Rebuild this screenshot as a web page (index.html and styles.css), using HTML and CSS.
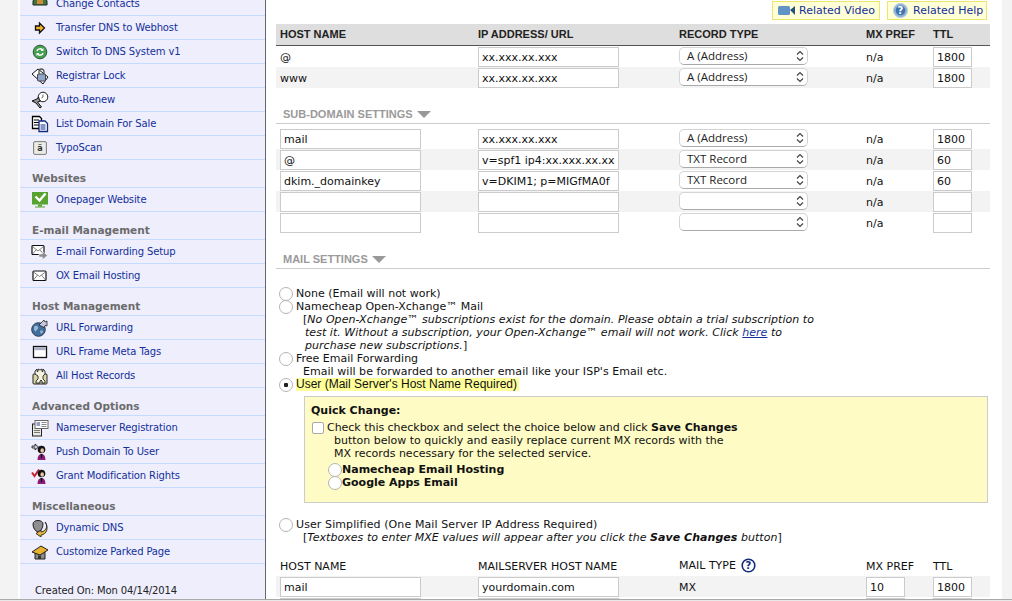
FILE: index.html
```html
<!DOCTYPE html>
<html lang="en">
<head>
  <meta charset="UTF-8">
  <title>Domain DNS Settings</title>
  <link rel="stylesheet" href="styles.css">
</head>
<body>

  <div class="page">

  <div class="side">
    <ul class="menu first">
      <li><svg class="ico" viewBox="0 0 18 18"><path d="M2 6l2-3h10l2 3v4H2z" fill="#3c7a3a" stroke="#222"/><circle cx="9" cy="1" r="3.500" fill="#b4682c" stroke="#222"/><rect x="6" y="3" width="6" height="6" fill="#d08a3c"/></svg><span>Change Contacts</span></li>
      <li><svg class="ico" viewBox="0 0 18 18"><path d="M4.500 7h4V4l5 5-5 5v-3h-4z" fill="#f2b32c" stroke="#111" stroke-width="1.300"/></svg><span>Transfer DNS to Webhost</span></li>
      <li><svg class="ico" viewBox="0 0 18 18"><circle cx="9" cy="9" r="6.800" fill="#46a04e" stroke="#2c5c3a"/><path d="M6 8a3.200 3.200 0 0 1 5.300-1.300M12 10a3.200 3.200 0 0 1-5.300 1.300" fill="none" stroke="#fff" stroke-width="1.400"/><path d="M12.500 5v3h-3zM5.500 13v-3h3z" fill="#fff"/></svg><span>Switch To DNS System v1</span></li>
      <li><svg class="ico" viewBox="0 0 18 18"><path d="M1 7l6-5 10 8-5 7z" fill="#fff" stroke="#111"/><rect x="6.500" y="7" width="8" height="7" rx="1" fill="#8fa5c8" stroke="#445"/><path d="M8 7V4.500a2.500 2.500 0 0 1 5 0V7" fill="none" stroke="#555" stroke-width="1.300"/></svg><span>Registrar Lock</span></li>
      <li><svg class="ico" viewBox="0 0 18 18"><circle cx="12" cy="6" r="4.800" fill="#fff" stroke="#222"/><path d="M12 3.500V6l-1.500 1" fill="none" stroke="#444" stroke-width=".8"/><path d="M1 10l5-2 1.500-2 1 3 1 1-3 1 4 5-1.500 1-4-5z" fill="#999" stroke="#111"/></svg><span>Auto-Renew</span></li>
      <li><svg class="ico" viewBox="0 0 18 18"><path d="M1.500 1.500h7l2 2v10h-9z" fill="#fff" stroke="#000" stroke-width="1.300"/><path d="M3 5h5M3 7.500h5M3 10h5" stroke="#000"/><path d="M8 6h6l2.500 2.500v8H8z" fill="#fff" stroke="#102a80" stroke-width="1.300"/><path d="M9.500 10h5M9.500 12h5M9.500 14h5" stroke="#102a80"/></svg><span>List Domain For Sale</span></li>
      <li><svg class="ico" viewBox="0 0 18 18"><rect x="2.500" y="2.500" width="13" height="13" rx="1.500" fill="#dcdcd6" stroke="#888"/><rect x="4" y="4" width="10" height="10" fill="#ecece6"/><text x="9" y="11.500" class="key">ä</text></svg><span>TypoScan</span></li>
    </ul>

    <h3>Websites</h3>
    <ul class="menu">
      <li><svg class="ico" viewBox="0 0 18 18"><rect x="1" y="1" width="16" height="12.500" fill="#57a32f"/><path d="M7 13.500h4v2H7z" fill="#57a32f"/><path d="M4 15.500h10v1H4z" fill="#57a32f"/><path d="M4.500 5.500l4 4 6-7" fill="none" stroke="#fff" stroke-width="2.400"/></svg><span>Onepager Website</span></li>
    </ul>

    <h3>E-mail Management</h3>
    <ul class="menu">
      <li><svg class="ico" viewBox="0 0 18 18"><rect x="1" y="2.500" width="12" height="9" rx="1" fill="#fff" stroke="#111" stroke-width="1.200"/><path d="M1.500 3.500L7 8l5.500-4.500M1.500 11L5.500 6.500M12.500 11L8.500 6.500" fill="none" stroke="#666" stroke-width=".8"/><path d="M8 11h3.500V8.500l5 4-5 4V14H8z" fill="#8a8a92" stroke="#eee" stroke-width=".6"/></svg><span>E-mail Forwarding Setup</span></li>
      <li><svg class="ico" viewBox="0 0 18 18"><rect x="2" y="4" width="13" height="9.500" rx="1" fill="#fff" stroke="#111" stroke-width="1.200"/><path d="M2.500 5l6 4.500 6-4.500M2.500 13L6.500 8M14.500 13L10.500 8" fill="none" stroke="#666" stroke-width=".8"/></svg><span>OX Email Hosting</span></li>
    </ul>

    <h3>Host Management</h3>
    <ul class="menu">
      <li><svg class="ico" viewBox="0 0 18 18"><circle cx="7.500" cy="10.500" r="6.800" fill="#3f6f9c" stroke="#2c3e58"/><path d="M3 8c2-2 3-1 4 0s-1 3-2 4-2 0-2-4zM9 12c2-1 3 0 3 1l-2 2z" fill="#9db8d2"/><path d="M8 6l5-5 1 2 2-1v5l-2-.500-1 2z" fill="#c7c7e0" stroke="#222" stroke-width=".8"/></svg><span>URL Forwarding</span></li>
      <li><svg class="ico" viewBox="0 0 18 18"><rect x="2.500" y="3.500" width="13" height="11" fill="#fff" stroke="#111" stroke-width="1.300"/><rect x="3.200" y="4.200" width="11.600" height="3" fill="#a9b0c6"/></svg><span>URL Frame Meta Tags</span></li>
      <li><svg class="ico" viewBox="0 0 18 18"><rect x="2" y="7" width="14" height="10" rx="1" fill="#dcd7a8" stroke="#222"/><path d="M4 4l2-2v2.500h1V2l2 1 2-1v2.500h1V2l2 2v3l-2 2v3l2 2v2h-3v-2l-1-1-1 1v2H5v-2l2-2V9L4 7z" fill="#f3f1e0" stroke="#222" stroke-width=".9"/></svg><span>All Host Records</span></li>
    </ul>

    <h3>Advanced Options</h3>
    <ul class="menu">
      <li><svg class="ico" viewBox="0 0 18 18"><rect x="1.500" y="5" width="9" height="12" fill="#e8e8e2" stroke="#222"/><rect x="4" y="1.500" width="13" height="8" fill="#fff" stroke="#666"/><rect x="5.500" y="3" width="3.500" height="4" fill="#8f9fc4"/><path d="M10.500 3.500h5M10.500 5.500h5M10.500 7.500h5" stroke="#888"/><path d="M3 11.500h6M3 13.500h6" stroke="#777"/></svg><span>Nameserver Registration</span></li>
      <li><svg class="ico" viewBox="0 0 18 18"><path d="M1 3h3V1l3.500 3L4 7V5H1z" fill="#c8c8dc" stroke="#111" stroke-width=".8"/><circle cx="10.500" cy="6.500" r="3.800" fill="#111"/><ellipse cx="11.200" cy="7.500" rx="1.800" ry="2.300" fill="#e9c2a6"/><path d="M6.500 17c0-4 1.500-6 4-6s4 2 4 6z" fill="#8c1c78"/><path d="M9.500 11h2l-.5 4h-1z" fill="#111"/></svg><span>Push Domain To User</span></li>
      <li><svg class="ico" viewBox="0 0 18 18"><path d="M1 5.500L3.500 9 8 2.500" fill="none" stroke="#c8222c" stroke-width="2"/><circle cx="10.500" cy="6.500" r="3.800" fill="#111"/><ellipse cx="11.200" cy="7.500" rx="1.800" ry="2.300" fill="#e9c2a6"/><path d="M6.500 17c0-4 1.500-6 4-6s4 2 4 6z" fill="#8c1c78"/><path d="M9.500 11h2l-.5 4h-1z" fill="#111"/></svg><span>Grant Modification Rights</span></li>
    </ul>

    <h3>Miscellaneous</h3>
    <ul class="menu">
      <li><svg class="ico" viewBox="0 0 18 18"><path d="M2 5c0-2 2-3.500 5-3.500S12 3 12 5c0 4-2 7-5 8-3-1-5-4-5-8z" fill="#8e8e8e" stroke="#222"/><path d="M14 3c3 3 2 9-4 10v-2l-5 3.500 5 3.500v-2c6-.5 8-8 4-13z" fill="#e8b93a" stroke="#222" stroke-width=".9"/></svg><span>Dynamic DNS</span></li>
      <li><svg class="ico" viewBox="0 0 18 18"><path d="M4 9v7h10V9L9 6z" fill="#8a8f88" stroke="#222"/><path d="M1 9l9-6 7 4-8 5z" fill="#e9b12f" stroke="#222"/><rect x="7" y="12.500" width="3" height="3.500" fill="#333"/></svg><span>Customize Parked Page</span></li>
    </ul>

    <p class="dates">Created On: Mon 04/14/2014<br>Expires On: Wed 04/14/2015</p>
  </div>

  <div class="main">
    <div class="tools">
      <a class="tool tool-video"><svg class="tool-ico" width="17" height="11" viewBox="0 0 17 11"><rect x="0" y="1" width="12" height="9" rx="1.500" fill="#5f94c4"/><path d="M12 5l5-4v9z" fill="#27527e"/></svg>Related Video</a>
      <a class="tool tool-help"><svg class="tool-ico" width="15" height="15" viewBox="0 0 15 15"><circle cx="7.500" cy="7.500" r="7" fill="#8fb2d6" stroke="#b5cade"/><circle cx="7.500" cy="7.500" r="4.800" fill="#3f74ae"/><text x="7.500" y="11" class="help-q">?</text></svg>Related Help</a>
    </div>

    <div class="grid head">
      <span>HOST NAME</span><span>IP ADDRESS/ URL</span><span>RECORD TYPE</span><span>MX PREF</span><span>TTL</span>
    </div>
    <div class="grid">
      <span>@</span><input class="wide" value="xx.xxx.xx.xxx"><div class="sel"><span>A (Address)</span><svg class="updown" width="8" height="12" viewBox="0 0 8 12"><path d="M1 4.500L4 1.500l3 3M1 7.500l3 3 3-3" fill="none" stroke="#444" stroke-width="1.200"/></svg></div><span>n/a</span><input class="small" value="1800">
    </div>
    <div class="grid alt">
      <span>www</span><input class="wide" value="xx.xxx.xx.xxx"><div class="sel"><span>A (Address)</span><svg class="updown" width="8" height="12" viewBox="0 0 8 12"><path d="M1 4.500L4 1.500l3 3M1 7.500l3 3 3-3" fill="none" stroke="#444" stroke-width="1.200"/></svg></div><span>n/a</span><input class="small" value="1800">
    </div>

    <div class="section">SUB-DOMAIN SETTINGS<i class="tri"></i></div>
    <div class="rows">
      <div class="grid">
        <input class="wide" value="mail"><input class="wide" value="xx.xxx.xx.xxx"><div class="sel"><span>A (Address)</span><svg class="updown" width="8" height="12" viewBox="0 0 8 12"><path d="M1 4.500L4 1.500l3 3M1 7.500l3 3 3-3" fill="none" stroke="#444" stroke-width="1.200"/></svg></div><span>n/a</span><input class="small" value="1800">
      </div>
      <div class="grid alt">
        <input class="wide" value="@"><input class="wide" value="v=spf1 ip4:xx.xxx.xx.xxx ~all"><div class="sel"><span>TXT Record</span><svg class="updown" width="8" height="12" viewBox="0 0 8 12"><path d="M1 4.500L4 1.500l3 3M1 7.500l3 3 3-3" fill="none" stroke="#444" stroke-width="1.200"/></svg></div><span>n/a</span><input class="small" value="60">
      </div>
      <div class="grid">
        <input class="wide" value="dkim._domainkey"><input class="wide" value="v=DKIM1; p=MIGfMA0f"><div class="sel"><span>TXT Record</span><svg class="updown" width="8" height="12" viewBox="0 0 8 12"><path d="M1 4.500L4 1.500l3 3M1 7.500l3 3 3-3" fill="none" stroke="#444" stroke-width="1.200"/></svg></div><span>n/a</span><input class="small" value="60">
      </div>
      <div class="grid alt">
        <input class="wide"><input class="wide"><div class="sel"><svg class="updown" width="8" height="12" viewBox="0 0 8 12"><path d="M1 4.500L4 1.500l3 3M1 7.500l3 3 3-3" fill="none" stroke="#444" stroke-width="1.200"/></svg></div><span>n/a</span><input class="small">
      </div>
      <div class="grid">
        <input class="wide"><input class="wide"><div class="sel"><svg class="updown" width="8" height="12" viewBox="0 0 8 12"><path d="M1 4.500L4 1.500l3 3M1 7.500l3 3 3-3" fill="none" stroke="#444" stroke-width="1.200"/></svg></div><span>n/a</span><input class="small">
      </div>
    </div>

    <div class="section">MAIL SETTINGS<i class="tri"></i></div>
    <div class="mail">
      <label class="opt"><input type="radio" name="mail">None (Email will not work)</label>
      <label class="opt"><input type="radio" name="mail">Namecheap Open-Xchange™ Mail</label>
      <p class="note note-long">[<em>No Open-Xchange™ subscriptions exist for the domain. Please obtain a trial subscription to<br>test it. Without a subscription, your Open-Xchange™ email will not work. Click <a class="link">here</a> to<br>purchase new subscriptions.</em>]</p>
      <label class="opt"><input type="radio" name="mail">Free Email Forwarding</label>
      <p class="note">Email will be forwarded to another email like your ISP's Email etc.</p>
      <label class="opt"><input type="radio" name="mail" checked><span class="mark">User (Mail Server's Host Name Required)</span></label>

      <div class="quick">
        <h4>Quick Change:</h4>
        <label class="check"><input type="checkbox"><span>Check this checkbox and select the choice below and click <b>Save Changes</b></span></label>
        <p class="check-more">button below to quickly and easily replace current MX records with the<br>MX records necessary for the selected service.</p>
        <label class="opt sub"><input type="radio" name="quick"><b>Namecheap Email Hosting</b></label>
        <label class="opt sub"><input type="radio" name="quick"><b>Google Apps Email</b></label>
      </div>

      <label class="opt opt-wide"><input type="radio" name="mail">User Simplified (One Mail Server IP Address Required)</label>
      <p class="note">[<em>Textboxes to enter MXE values will appear after you click the <b>Save Changes</b> button</em>]</p>
    </div>

    <div class="grid head-plain">
      <span>HOST NAME</span><span>MAILSERVER HOST NAME</span><span class="mail-type">MAIL TYPE<svg class="q" width="15" height="15" viewBox="0 0 15 15"><circle cx="7.500" cy="7.500" r="6.300" fill="#fff" stroke="#122c7c" stroke-width="1.600"/><text x="7.500" y="11" class="q-mark">?</text></svg></span><span>MX PREF</span><span>TTL</span>
    </div>
    <div class="grid alt">
      <input class="wide" value="mail"><input class="wide" value="yourdomain.com"><span>MX</span><input class="small" value="10"><input class="small" value="1800">
    </div>
    <div class="grid">
      <input class="wide"><input class="wide"><span></span><input class="small"><input class="small">
    </div>
  </div>

  </div>

  <div class="window-edge"></div>

</body>
</html>
```

FILE: styles.css
```css
html, body {
  height: 100%;
}

body {
  margin: 0;
  height: 601px;
  overflow: hidden;
  background-color: #f3f3f3;
  color: #111;
  font-family: "DejaVu Sans", sans-serif;
  font-size: 11px;
}

.page {
  display: flex;
  height: 601px;
  padding-left: 18px;
  padding-right: 10px;
}

/* left menu */
.side {
  flex: none;
  width: 245px;
  background-color: #eeeefd;
  border-left: 2px solid #fff;
  border-right: 1px solid #666;
  overflow: hidden;
}

.menu {
  list-style: none;
  margin: 0;
  padding: 0;
}

.menu.first {
  margin-top: -8px;
}

.menu li {
  display: flex;
  align-items: center;
  gap: 7px;
  height: 24px;
  box-sizing: border-box;
  padding-left: 11px;
  border-bottom: 1px solid #c6dcff;
  color: #14309a;
  font-size: 10px;
  letter-spacing: -0.13px;
  overflow: hidden;
}

.ico {
  flex: none;
  width: 18px;
  height: 18px;
}

.key {
  font-size: 8px;
  font-weight: bold;
  text-anchor: middle;
  fill: #333;
}

.side h3 {
  margin: 0;
  height: 28px;
  box-sizing: border-box;
  padding: 12px 0 0 12px;
  border-bottom: 1px solid #c6dcff;
  color: #6b6b6b;
  font-size: 10.5px;
  line-height: 13px;
}

.dates {
  margin: 20px 0 0 15px;
  color: #222;
  font-size: 10px;
  letter-spacing: -0.13px;
  line-height: 14px;
}

/* main column */
.main {
  flex: 1;
  background-color: #fff;
  padding: 1px 12px 0 10px;
}

.tools {
  display: flex;
  justify-content: flex-end;
  gap: 7px;
  height: 19px;
  margin-right: 3px;
  margin-bottom: 4px;
}

.tool {
  display: flex;
  align-items: center;
  gap: 4px;
  box-sizing: border-box;
  padding-left: 5px;
  background-color: #ffffd8;
  border: 1px solid #eee56c;
  color: #14309a;
  font-size: 11px;
}

.tool-video {
  width: 108px;
}

.tool-help {
  width: 100px;
  gap: 5px;
}

.help-q {
  font-size: 10px;
  font-weight: bold;
  text-anchor: middle;
  fill: #fff;
}

.grid {
  display: grid;
  grid-template-columns: 198px 201px 187px 67px 1fr;
  align-items: center;
  height: 21px;
  box-sizing: border-box;
  padding: 1px 0 0 4px;
}

.alt {
  background-color: #f3f3f3;
}

.head {
  height: 22px;
  padding-top: 0;
  padding-bottom: 2px;
  background-color: #dedede;
  border-bottom: 1px solid #555;
  color: #222;
  font-family: "Liberation Sans", sans-serif;
  font-size: 11px;
  font-weight: bold;
}

.head-plain {
  height: 32px;
  padding-top: 0;
  padding-bottom: 3px;
  align-items: end;
}

.mail-type {
  display: flex;
  align-items: center;
  gap: 5px;
}

.q {
  flex: none;
}

.q-mark {
  font-size: 10px;
  font-weight: bold;
  text-anchor: middle;
  fill: #122c7c;
}

input.wide, input.small {
  box-sizing: border-box;
  height: 20px;
  margin: 0;
  padding: 0 3px;
  border: 1px solid #cbcbcb;
  background-color: #fff;
  color: #111;
  font-family: "DejaVu Sans", sans-serif;
  font-size: 11px;
}

input.wide {
  width: 141px;
}

input.small {
  width: 39px;
}

.sel {
  display: flex;
  align-items: center;
  justify-content: space-between;
  align-self: start;
  width: 129px;
  height: 18px;
  box-sizing: border-box;
  padding: 0 3px 0 7px;
  background-color: #fff;
  border: 1px solid #d4d4d4;
  border-bottom-color: #aaa;
  border-radius: 5px;
  color: #222;
  font-family: "Open Sans", sans-serif;
  font-size: 11.5px;
}

.sel span {
  margin-bottom: 2px;
}

.updown {
  margin-left: auto;
}

.section {
  display: flex;
  align-items: flex-end;
  gap: 4px;
  height: 36px;
  box-sizing: border-box;
  padding: 0 0 2px 7px;
  border-bottom: 1px solid #ccc;
  color: #9a9a9a;
  font-family: "Liberation Sans", sans-serif;
  font-size: 11px;
  font-weight: bold;
  line-height: 13px;
}

.tri {
  width: 0;
  height: 0;
  margin-bottom: 3px;
  border-left: 7px solid transparent;
  border-right: 7px solid transparent;
  border-top: 7px solid #999;
}

.rows {
  margin-top: 4px;
}

/* mail settings */
.mail {
  margin-top: 18px;
  line-height: 13px;
}

.opt {
  display: flex;
  align-items: center;
  gap: 3px;
  height: 13px;
  padding-left: 3px;
}

.opt-wide {
  letter-spacing: 0.1px;
}

.opt input {
  appearance: none;
  flex: none;
  width: 14px;
  height: 14px;
  margin: 0;
  background-color: #fff;
  border: 1px solid #b4b4b4;
  border-radius: 50%;
}

.opt input:checked {
  background: radial-gradient(circle, #222 0, #222 2px, #fff 2.500px);
}

.note {
  margin: 0;
  padding-left: 27px;
  letter-spacing: 0.04px;
}

.note-long {
  padding-left: 29px;
  text-indent: -2px;
}

.link {
  color: #14309a;
  text-decoration: underline;
}

.mark {
  padding-right: 2px;
  background-color: #ffff99;
  font-family: "Liberation Sans", sans-serif;
  font-size: 12px;
}

.quick {
  box-sizing: border-box;
  height: 107px;
  margin: 5px 2px 15px 28px;
  padding: 7px 6px;
  background-color: #fefbc4;
  border: 1px solid #ccc;
}

.quick h4 {
  margin: 0 0 4px;
  font-size: 11px;
  line-height: 13px;
}

.check {
  display: flex;
  align-items: center;
  gap: 3px;
  height: 13px;
  letter-spacing: -0.03px;
}

.check input {
  appearance: none;
  flex: none;
  width: 12px;
  height: 12px;
  margin: 0 0 0 1px;
  background-color: #fff;
  border: 1px solid #aaa;
  border-radius: 2px;
}

.check-more {
  margin: 0 0 3px 23px;
}

.opt.sub {
  gap: 0;
  padding-left: 17px;
}

.window-edge {
  position: fixed;
  left: 0;
  right: 0;
  bottom: 0;
  height: 1px;
  background-color: #e8e8e8;
  border-top: 1px solid #aaa;
}
```
